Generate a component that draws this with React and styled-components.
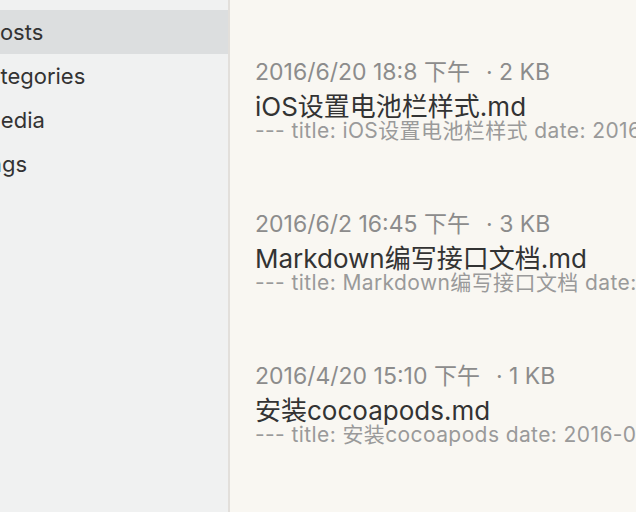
import React from "react";
import styled, { createGlobalStyle } from "styled-components";

const Global = createGlobalStyle`
  html, body { margin: 0; padding: 0; width: 636px; height: 512px; overflow: hidden; }
  body { font-family: Inter, "Noto Sans CJK SC", sans-serif; }
`;

const Frame = styled.div`
  display: flex;
  width: 636px;
  height: 512px;
  overflow: hidden;
`;

const Sidebar = styled.nav`
  flex: 0 0 228px;
  background: #f0f1f1;
  border-right: 2px solid #e2dfdb;
  padding-top: 10px;
  overflow: hidden;
`;

const NavItem = styled.div`
  height: 44px;
  display: flex;
  align-items: center;
  font-size: 22px;
  color: #333;
  background: ${(p) => (p.$active ? "#dcdedf" : "transparent")};
  white-space: nowrap;
  overflow: hidden;
`;

const NavLabel = styled.span`
  margin-left: ${(p) => p.$offset}px;
`;

const Content = styled.main`
  flex: 1;
  background: #f9f7f2;
  padding: 59px 0 0 25px;
  overflow: hidden;
  display: flex;
  flex-direction: column;
  gap: 69px;
`;

const Post = styled.article`
  display: flex;
  flex-direction: column;
  white-space: nowrap;
`;

const Meta = styled.div`
  font-size: 23px;
  line-height: 26px;
  color: #8c8c8c;
  margin-bottom: 10px;
`;

const Size = styled.span`
  margin-left: 16px;
`;

const Title = styled.div`
  font-size: 26px;
  line-height: 24px;
  color: #333;
`;

const Excerpt = styled.div`
  margin-top: 1px;
  font-size: 21px;
  line-height: 22px;
  letter-spacing: 0.4px;
  color: #9a9a9a;
`;

const nav = [
  { label: "Posts", offset: -14, active: true },
  { label: "Categories", offset: -28 },
  { label: "Media", offset: -19 },
  { label: "Tags", offset: -23 },
];

const posts = [
  { date: "2016/6/20 18:8 下午", size: "2 KB", title: "iOS设置电池栏样式.md", excerpt: "--- title: iOS设置电池栏样式 date: 2016-06-20" },
  { date: "2016/6/2 16:45 下午", size: "3 KB", title: "Markdown编写接口文档.md", excerpt: "--- title: Markdown编写接口文档 date: 2016-06-02" },
  { date: "2016/4/20 15:10 下午", size: "1 KB", title: "安装cocoapods.md", excerpt: "--- title: 安装cocoapods date: 2016-04-20" },
];

export default function App() {
  return (
    <Frame>
      <Global />
      <Sidebar>
        {nav.map((n) => (
          <NavItem key={n.label} $active={n.active}>
            <NavLabel $offset={n.offset}>{n.label}</NavLabel>
          </NavItem>
        ))}
      </Sidebar>
      <Content>
        {posts.map((p) => (
          <Post key={p.title}>
            <Meta>
              {p.date}
              <Size>· {p.size}</Size>
            </Meta>
            <Title>{p.title}</Title>
            <Excerpt>{p.excerpt}</Excerpt>
          </Post>
        ))}
      </Content>
    </Frame>
  );
}
